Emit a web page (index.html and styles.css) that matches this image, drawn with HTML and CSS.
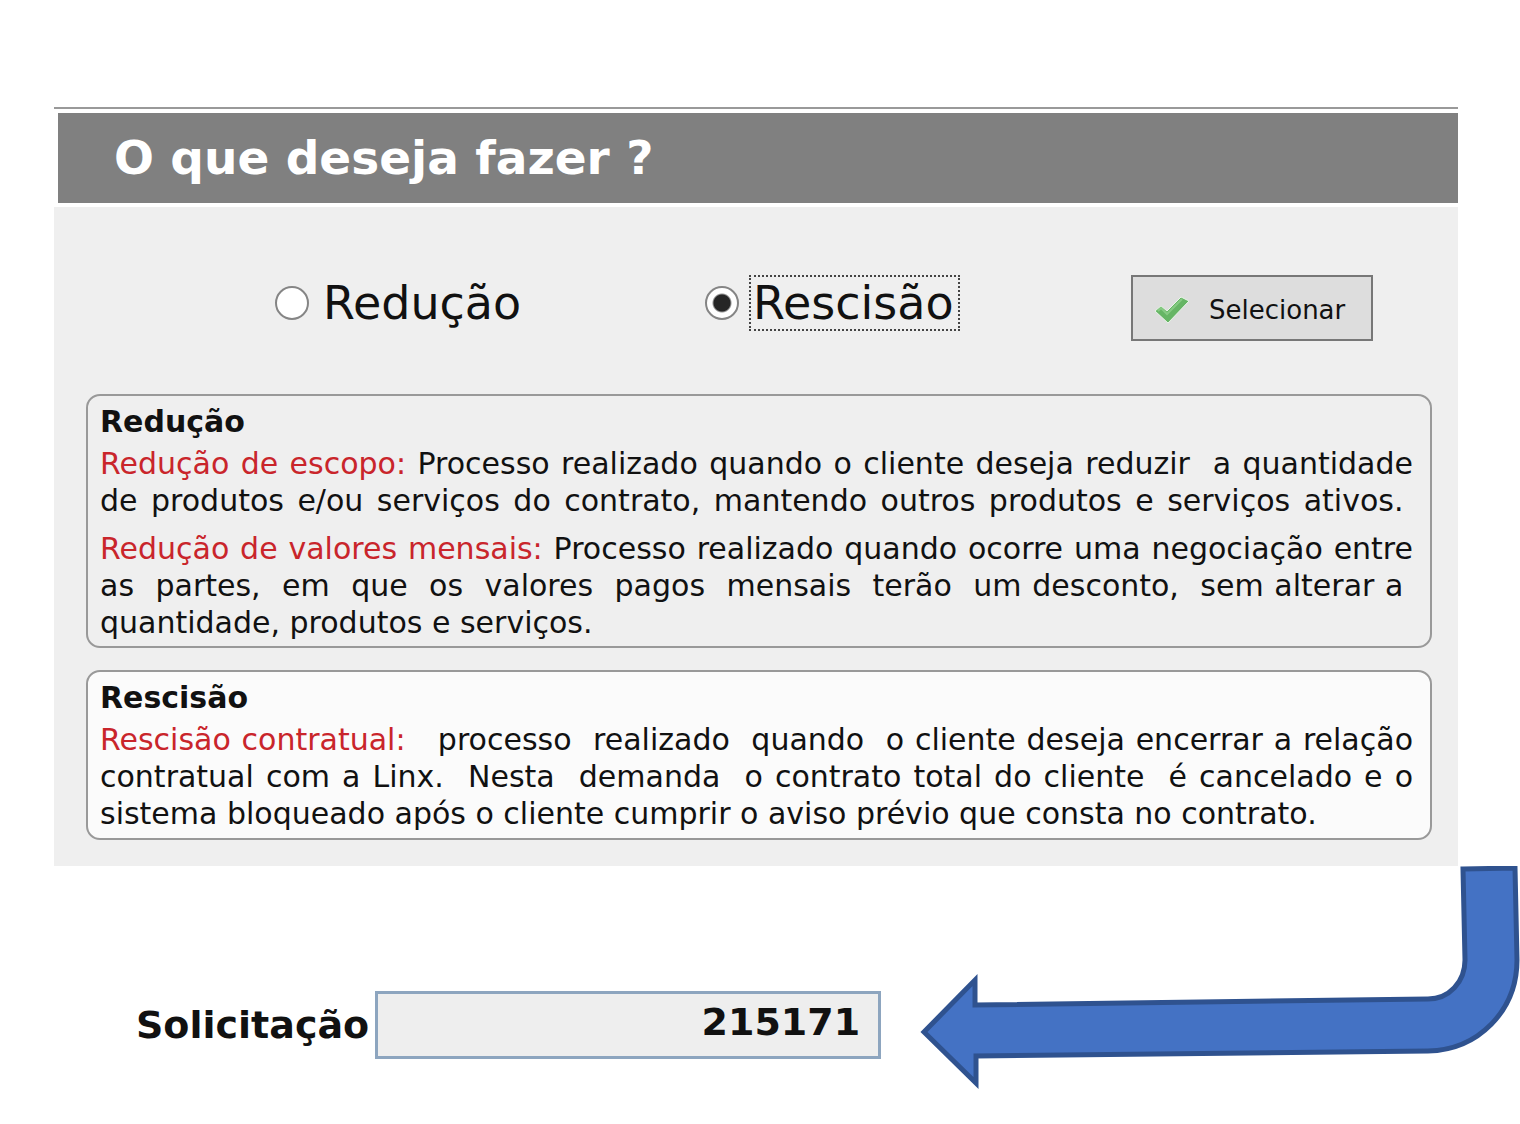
FILE: index.html
```html
<!DOCTYPE html>
<html lang="pt-BR">
<head>
    <meta charset="UTF-8">
    <meta name="viewport" content="width=device-width, initial-scale=1.0">
    <title>O que deseja fazer ?</title>
    <link rel="stylesheet" href="styles.css">
</head>
<body>
    <main class="panel">
        <h1 class="title">O que deseja fazer ?</h1>

        <form class="options">
            <label class="option"><input type="radio" name="acao" value="reducao"><span>Redução</span></label>
            <label class="option"><input type="radio" name="acao" value="rescisao" checked><span>Rescisão</span></label>
            <button type="button" class="select-btn">
                <svg width="38" height="34" viewBox="0 0 38 34">
                    <path d="M2 18 L8 13 L14 18 L28 4 L36 8 L15 30 Z" fill="#66b565" stroke="#e9f5e8" stroke-width="1" stroke-linejoin="round"/>
                    <path d="M5 18 L8 15 L14 21 L29 6" fill="none" stroke="#86ca83" stroke-width="2"/>
                </svg>
                <span>Selecionar</span>
            </button>
        </form>

        <section class="box">
            <h2>Redução</h2>
            <p>
                <span class="line"><em>Redução de escopo:</em> Processo realizado quando o cliente deseja reduzir &nbsp;a quantidade</span>
                <span class="line">de produtos e/ou serviços do contrato, mantendo outros produtos e serviços ativos.&nbsp;</span>
            </p>
            <p>
                <span class="line"><em>Redução de valores mensais:</em> Processo realizado quando ocorre uma negociação entre</span>
                <span class="line">as &nbsp;partes, &nbsp;em &nbsp;que &nbsp;os &nbsp;valores &nbsp;pagos &nbsp;mensais &nbsp;terão &nbsp;um desconto, &nbsp;sem alterar a&nbsp;</span>
                <span class="line last">quantidade, produtos e serviços.</span>
            </p>
        </section>

        <section class="box active">
            <h2>Rescisão</h2>
            <p>
                <span class="line"><em>Rescisão contratual:</em> &nbsp; processo &nbsp;realizado &nbsp;quando &nbsp;o cliente deseja encerrar a relação</span>
                <span class="line">contratual com a Linx. &nbsp;Nesta &nbsp;demanda &nbsp;o contrato total do cliente &nbsp;é cancelado e o</span>
                <span class="line last">sistema bloqueado após o cliente cumprir o aviso prévio que consta no contrato.</span>
            </p>
        </section>
    </main>

    <div class="result">
        <div class="field">
            <label for="solicitacao">Solicitação</label>
            <input type="text" id="solicitacao" value="215171" readonly>
        </div>
        <svg class="arrow" width="600" height="230" viewBox="0 0 600 230">
            <path d="M543 3 L595 2 L597 94 C597 145 558 184 508 185 L56 190 L56 217 L4 166 L55 114 L55 139 L508 133 C529 133 545 116 545 94 Z" fill="#4472c4" stroke="#2f528f" stroke-width="5"/>
        </svg>
    </div>
</body>
</html>
```
FILE: styles.css
```css
* {
    box-sizing: border-box;
}

body {
    margin: 0;
    padding-top: 107px;
    font-family: "DejaVu Sans", Verdana, sans-serif;
    background-color: #fff;
    color: #111;
}

.panel {
    margin: 0 62px 0 54px;
    padding-bottom: 26px;
    background-color: #efefef;
    border-top: 2px solid #999;
}

.title {
    margin: 0;
    padding: 0 56px;
    font-size: 47px;
    line-height: 90px;
    color: #fff;
    background-color: #808080;
    border: solid #fff;
    border-width: 4px 0 4px 4px;
}

.options {
    display: grid;
    grid-template-columns: 430px 1fr auto;
    align-items: start;
    padding: 68px 85px 53px 221px;
}

.option {
    display: flex;
    align-items: center;
    gap: 10px;
    font-size: 46px;
    line-height: 52px;
}

.option span {
    padding: 0 4px 0 2px;
    border: 2px dotted transparent;
}

.option input:checked + span {
    border-color: #444;
}

.option input {
    appearance: none;
    width: 34px;
    height: 34px;
    margin: 0;
    border: 2px solid #858585;
    border-radius: 50%;
    background-color: #fff;
}

.option input:checked {
    background-image: radial-gradient(circle, #262626 8px, #fff 10px);
}

.select-btn {
    display: flex;
    align-items: center;
    gap: 18px;
    width: 242px;
    height: 66px;
    padding: 3px 20px 0;
    font-family: inherit;
    font-size: 26px;
    color: #111;
    background-color: #ddd;
    border: 2px solid #777;
}

.box {
    margin: 0 26px 22px 32px;
    padding: 7px 17px 5px 12px;
    border: 2px solid #999;
    border-radius: 14px;
}

.box:last-child {
    margin-bottom: 0;
}

.box.active {
    padding-bottom: 6px;
    background-color: #fbfbfb;
}

.box h2 {
    margin: 0 0 5px;
    font-size: 30px;
    line-height: 37px;
}

.box p {
    margin: 0 0 11px;
    font-size: 30px;
    line-height: 37px;
}

.box p:last-child {
    margin-bottom: 0;
}

.box em {
    font-style: normal;
    color: #c9252b;
}

.line {
    display: block;
    text-align: justify;
    text-align-last: justify;
}

.line.last {
    text-align-last: left;
}

.result {
    display: flex;
    justify-content: space-between;
}

.field {
    display: flex;
    align-items: center;
    gap: 6px;
    height: 68px;
    margin: 125px 0 0 136px;
    font-size: 38px;
    font-weight: bold;
}

.field input {
    width: 506px;
    height: 68px;
    padding: 0 18px 6px;
    font: inherit;
    text-align: right;
    color: #111;
    background-color: #eee;
    border: 3px solid #8da5bf;
    border-radius: 0;
}
```
